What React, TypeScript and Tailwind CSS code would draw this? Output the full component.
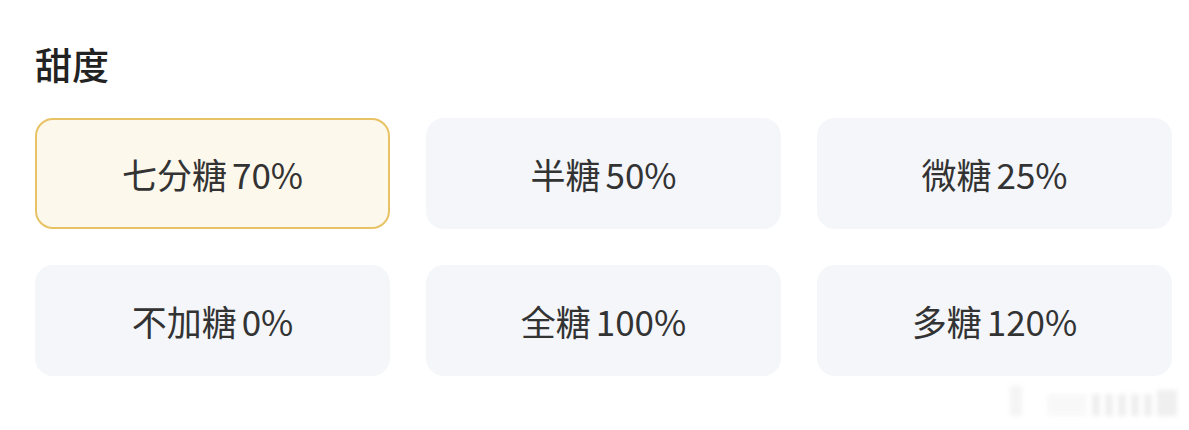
const options = [
  { label: "七分糖", value: "70%" },
  { label: "半糖", value: "50%" },
  { label: "微糖", value: "25%" },
  { label: "不加糖", value: "0%" },
  { label: "全糖", value: "100%" },
  { label: "多糖", value: "120%" },
];

export default function App() {
  const selected = 0;

  return (
    <div
      className="relative w-[1189px] h-[430px] bg-white overflow-hidden pl-[35px] pr-[17px] pt-[41px]"
      style={{ fontFamily: '"Noto Sans CJK SC", "Noto Sans", sans-serif' }}
    >
      <h2 className="text-[37px] leading-[46px] font-medium text-[#222]">甜度</h2>

      <div className="grid grid-cols-3 gap-x-[36px] gap-y-[36px] mt-[31px]">
        {options.map((o, i) => (
          <button
            key={o.label}
            className={`h-[111px] rounded-[18px] flex items-center justify-center text-[35px] text-[#333] pt-[1px] ${
              i === selected
                ? "bg-[#fdf8ec] border-[2.5px] border-[#e8c366]"
                : "bg-[#f4f6fa] border-[2.5px] border-transparent"
            }`}
          >
            <span>{o.label}</span>
            <span className="ml-[5px]">{o.value}</span>
          </button>
        ))}
      </div>

      {/* blurred watermark */}
      <div className="absolute right-[12px] bottom-[14px] flex items-end gap-[5px] opacity-40 blur-[2px]">
        <div className="w-[12px] h-[30px] bg-[#e5e5e5]" />
        <div className="w-[40px] h-[22px] bg-[#f0f0f0] ml-[20px]" />
        <div className="w-[8px] h-[22px] bg-[#d8d8d8]" />
        <div className="w-[8px] h-[22px] bg-[#d8d8d8]" />
        <div className="w-[8px] h-[22px] bg-[#d8d8d8]" />
        <div className="w-[8px] h-[22px] bg-[#d8d8d8]" />
        <div className="w-[8px] h-[22px] bg-[#d8d8d8]" />
        <div className="w-[20px] h-[26px] bg-[#d8d8d8]" />
      </div>
    </div>
  );
}
